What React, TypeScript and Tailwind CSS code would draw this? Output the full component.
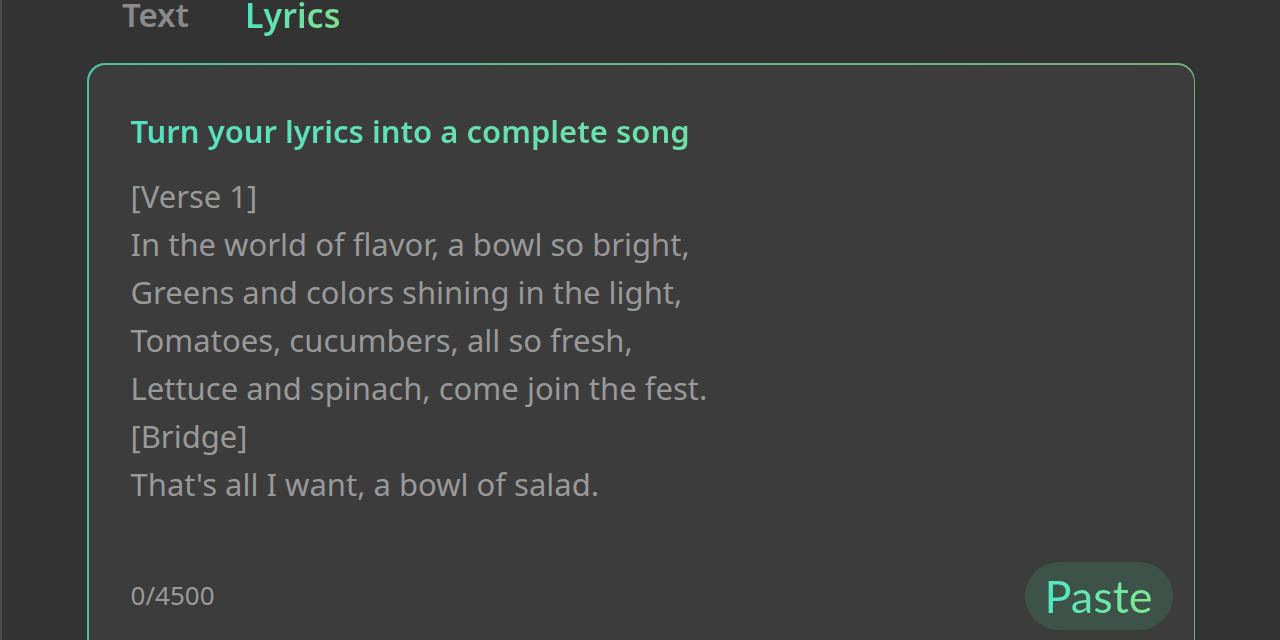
import { useState } from "react";

// --- Data ---

const lyrics = `[Verse 1]
In the world of flavor, a bowl so bright,
Greens and colors shining in the light,
Tomatoes, cucumbers, all so fresh,
Lettuce and spinach, come join the fest.
[Bridge]
That's all I want, a bowl of salad.`;

const tabs = ["Text", "Lyrics"] as const;

// --- Component ---

export default function App() {
  const [tab, setTab] = useState<(typeof tabs)[number]>("Lyrics");
  const [value, setValue] = useState("");

  return (
    <div
      className="h-[640px] w-full overflow-hidden border-l-2 border-[#4a4a4a] bg-[#333333]"
      style={{ fontFamily: '"Noto Sans", "Open Sans", sans-serif' }}
    >
      {/* Tabs */}
      <div className="flex h-[30px] items-start gap-[56px] pl-[120px]">
        {tabs.map((t) => (
          <button
            key={t}
            onClick={() => setTab(t)}
            className={
              "pb-[10px] text-[33px] font-semibold leading-[30px] " +
              (t === tab
                ? "bg-gradient-to-r from-[#4fe3c1] to-[#7ee08e] bg-clip-text text-[34px] font-bold text-transparent"
                : "text-[#8a8a8a]")
            }
          >
            {t}
          </button>
        ))}
      </div>

      {/* Lyrics card with gradient border */}
      <div className="mx-[85px] mt-[33px] rounded-[18px] bg-gradient-to-r from-[#4fbf9f] to-[#74b07a] p-[1.5px]">
        <div className="flex h-[620px] flex-col rounded-[17px] bg-[#3c3c3c] px-[42px] pt-[46px]">
          <h2 className="w-fit bg-gradient-to-r from-[#55e0c0] to-[#6ee0a8] bg-clip-text text-[31px] font-semibold leading-[40px] text-transparent">
            Turn your lyrics into a complete song
          </h2>

          <div className="relative mt-[21px] h-[360px]">
            {value === "" && (
              <p className="pointer-events-none absolute inset-0 whitespace-pre-wrap text-[31px] leading-[48px] text-[#999999]">
                {lyrics}
              </p>
            )}
            <textarea
              value={value}
              onChange={(e) => setValue(e.target.value)}
              className="h-full w-full resize-none bg-transparent text-[31px] leading-[48px] text-[#dddddd] outline-none"
            />
          </div>

          <div className="mt-[30px] flex items-center justify-between">
            <span className="text-[26px] text-[#9a9a9a]">{value.length}/4500</span>
            <button className="-mr-[21px] flex h-[68px] w-[148px] items-center justify-center rounded-full bg-[#3d5249]">
              <span
                className="bg-gradient-to-r from-[#50e6c4] to-[#80e890] bg-clip-text text-[45px] leading-[50px] text-transparent"
                style={{ fontFamily: 'Lato, "Noto Sans", sans-serif' }}
              >
                Paste
              </span>
            </button>
          </div>
        </div>
      </div>
    </div>
  );
}
